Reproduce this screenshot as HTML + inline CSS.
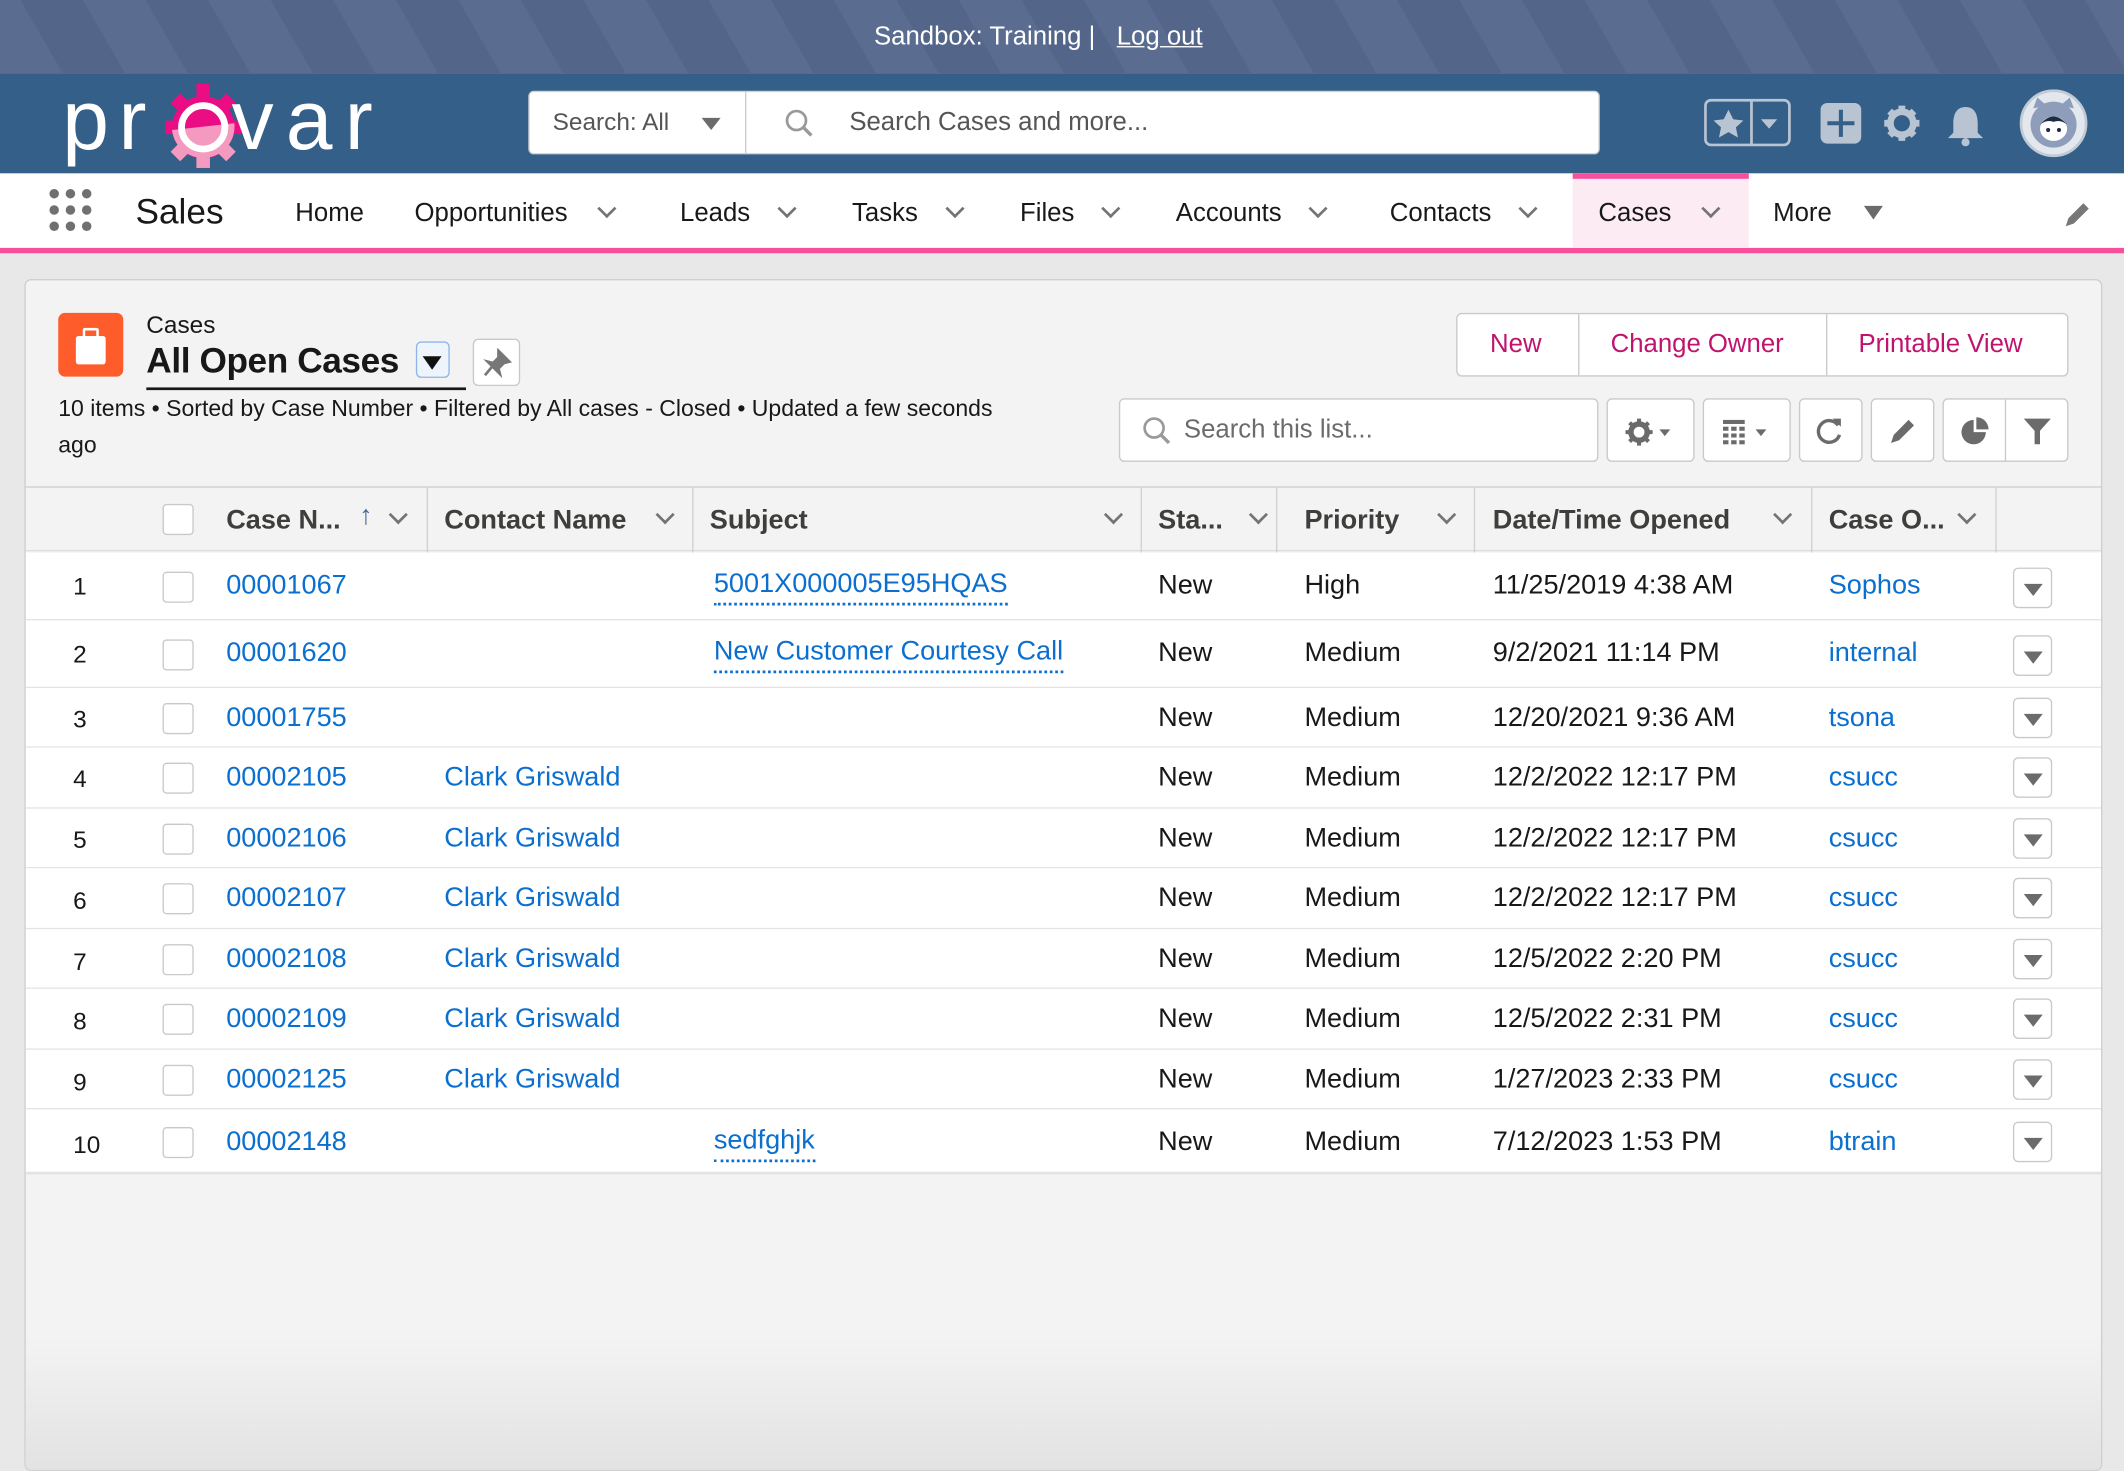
<!DOCTYPE html>
<html><head><meta charset="utf-8">
<style>
*{box-sizing:border-box;margin:0;padding:0}
html,body{width:2124px;height:1468px;overflow:hidden;background:#e9e9e9}
#w{position:absolute;left:0;top:0;width:1568px;height:1084px;transform:scale(1.354592);transform-origin:0 0;font-family:"Liberation Sans",Arial,sans-serif;color:#181818;background:#e8e8e8}
.a{position:absolute}
.top{left:0;top:0;width:1568px;height:54px;background:repeating-linear-gradient(60deg,#5a6d91 0 40px,#536689 40px 80px)}
.hdr{left:0;top:54px;width:1568px;height:74px;background:#345f89}
.nav{left:0;top:128px;width:1568px;border-bottom:4px solid #f84f9c;height:59px;background:#fff}
.ni{position:absolute;top:0;height:55px;line-height:57px;font-size:19px;color:#181818}
.chev{display:inline-block;width:10px;height:10px;border-right:2px solid #747474;border-bottom:2px solid #747474;transform:rotate(45deg);margin-left:14px;position:relative;top:-4px}
.card{left:18px;top:206px;width:1534px;height:880px;background:#f3f3f3;border:1px solid #cfcfcf;border-radius:5px;overflow:hidden}
.btn{position:absolute;background:#fff;border:1px solid #c9c9c9;border-radius:4px}
.tbl{left:0;top:152px;width:1534px}
.th{position:absolute;top:0;height:48px;line-height:48px;font-weight:bold;font-size:20px;color:#3e3e3c}
.sep{position:absolute;top:0;width:1px;height:48px;background:#d0d0d0}
.hc{position:absolute;top:16px}
.hc .chev{margin-left:0}
.row{position:absolute;left:0;width:1534px;background:#fff;border-bottom:1px solid #e3e3e3}
.c{position:absolute;font-size:20px;white-space:nowrap}
.lk{color:#0b6fcf}
.ul{border-bottom:2px dotted #0b6fcf;padding-bottom:2px}
.cb{position:absolute;left:101px;width:23px;height:23px;border:1px solid #c9c9c9;border-radius:3px;background:#fff}
.act{position:absolute;left:1467px;width:29px;height:30px;border:1px solid #c9c9c9;border-radius:4px;background:#fff}
.act:after{content:"";position:absolute;left:7px;top:11px;border-left:7px solid transparent;border-right:7px solid transparent;border-top:9px solid #6b6b6b}
</style></head><body><div id="w">
<div class="a top"></div>
<div class="a" style="left:0;top:17px;width:1533px;text-align:center;color:#fff;font-size:19px">Sandbox: Training |&nbsp;&nbsp;&nbsp;<span style="text-decoration:underline">Log out</span></div>
<div class="a hdr"></div>
<svg class="a" style="left:40px;top:58px" width="270" height="70" viewBox="0 0 270 70">
 <g fill="#ea0d83"><circle cx="110" cy="36" r="23"/>
 <rect x="105" y="4" width="10" height="10"/><rect x="82" y="31" width="10" height="10"/><rect x="128" y="31" width="10" height="10"/>
 <rect x="88" y="13" width="10" height="10" transform="rotate(45 93 18)"/><rect x="122" y="13" width="10" height="10" transform="rotate(45 127 18)"/></g>
 <g fill="#f49ac1"><path d="M87 38 L133 33 A23 23 0 0 1 87 38Z"/><rect x="105" y="58" width="10" height="8"/>
 <rect x="88" y="49" width="10" height="10" transform="rotate(45 93 54)"/><rect x="122" y="49" width="10" height="10" transform="rotate(45 127 54)"/></g>
 <circle cx="110" cy="36" r="16" fill="none" stroke="#fff" stroke-width="5"/>
 <text x="6" y="52" font-family="Liberation Sans" font-size="62" fill="#fff" letter-spacing="7">pr</text>
 <text x="131" y="52" font-family="Liberation Sans" font-size="62" fill="#fff" letter-spacing="9">var</text>
</svg>
<div class="a" style="left:390px;top:67px;width:791px;height:47px;background:#fff;border-radius:4px;border:1px solid #cfcfcf"></div>
<div class="a" style="left:550px;top:68px;width:1px;height:45px;background:#ccc"></div>
<div class="a" style="left:408px;top:80px;font-size:18px;color:#555">Search: All</div>
<div class="a" style="left:518px;top:87px;border-left:7px solid transparent;border-right:7px solid transparent;border-top:9px solid #6b6b6b"></div>
<svg class="a" style="left:578px;top:79px" width="24" height="24"><circle cx="10" cy="10" r="7" fill="none" stroke="#999" stroke-width="2"/><path d="M15 15l6 6" stroke="#999" stroke-width="2.5"/></svg>
<div class="a" style="left:627px;top:80px;font-size:19px;color:#555">Search Cases and more...</div>
<svg class="a" style="left:1258px;top:66px" width="300" height="52">
 <rect x="1" y="8" width="62" height="33" rx="4" fill="none" stroke="#b9c4d3" stroke-width="2"/><line x1="35" y1="8" x2="35" y2="41" stroke="#b9c4d3" stroke-width="2"/>
 <path d="M18 15l3.5 7 7.5 1-5.5 5 1.5 7.5-7-4-7 4 1.5-7.5-5.5-5 7.5-1z" fill="#b9c4d3"/>
 <path d="M42 22h12l-6 7z" fill="#b9c4d3"/>
 <rect x="86" y="10" width="30" height="30" rx="5" fill="#b9c4d3"/><path d="M101 15v20M91 25h20" stroke="#345f89" stroke-width="3"/>
 <circle cx="146" cy="25" r="11" fill="#b9c4d3"/><g stroke="#b9c4d3" stroke-width="5"><path d="M146 12v26M133 25h26M137 16l18 18M155 16l-18 18"/></g><circle cx="146" cy="25" r="6" fill="#345f89"/>
 <path d="M193 13c-7 0-9 6-9 12v7l-4 4h26l-4-4v-7c0-6-2-12-9-12z" fill="#b9c4d3"/><circle cx="193" cy="39" r="3" fill="#b9c4d3"/>
 <circle cx="258" cy="25" r="24" fill="#e3e8ef" stroke="#c2cad6" stroke-width="2"/>
 <path d="M243 14l3-8 7 6zM273 14l-3-8-7 6z" fill="#8d9dba"/>
 <circle cx="258" cy="26" r="17" fill="#8d9dba"/><ellipse cx="258" cy="29" rx="10" ry="9" fill="#fff"/><path d="M248 26q10-12 20 0q-5-4-10-2q-5-2-10 2z" fill="#1e2b45"/>
 <circle cx="254" cy="30" r="1.5" fill="#1e2b45"/><circle cx="262" cy="30" r="1.5" fill="#1e2b45"/>
</svg>
<div class="a nav"></div>
<div class="a" style="left:1161px;top:128px;width:130px;height:55px;background:#fdebf4;border-top:4px solid #f84f9c"></div>
<svg class="a" style="left:36px;top:139px" width="34" height="34"><g fill="#707070"><circle cx="4" cy="4" r="3.5"/><circle cx="16" cy="4" r="3.5"/><circle cx="28" cy="4" r="3.5"/><circle cx="4" cy="16" r="3.5"/><circle cx="16" cy="16" r="3.5"/><circle cx="28" cy="16" r="3.5"/><circle cx="4" cy="28" r="3.5"/><circle cx="16" cy="28" r="3.5"/><circle cx="28" cy="28" r="3.5"/></g></svg>
<div class="ni" style="left:100px;font-size:26px;top:128px">Sales</div>
<div class="ni" style="left:218px;top:129px">Home</div>
<div class="ni" style="left:306px;top:129px">Opportunities<span class="chev" style="margin-left:24px"></span></div>
<div class="ni" style="left:502px;top:129px">Leads<span class="chev" style="margin-left:22px"></span></div>
<div class="ni" style="left:629px;top:129px">Tasks<span class="chev" style="margin-left:22px"></span></div>
<div class="ni" style="left:753px;top:129px">Files<span class="chev" style="margin-left:22px"></span></div>
<div class="ni" style="left:868px;top:129px">Accounts<span class="chev" style="margin-left:22px"></span></div>
<div class="ni" style="left:1026px;top:129px">Contacts<span class="chev" style="margin-left:22px"></span></div>
<div class="ni" style="left:1180px;top:129px">Cases<span class="chev" style="margin-left:24px"></span></div>
<div class="ni" style="left:1309px;top:129px">More</div>
<div class="a" style="left:1376px;top:152px;border-left:7px solid transparent;border-right:7px solid transparent;border-top:10px solid #6b6b6b"></div>
<svg class="a" style="left:1522px;top:146px" width="24" height="24"><path d="M3 21l2-6 11-11 4 4-11 11z" fill="#777"/></svg>

<div class="a card">
 <div class="a" style="left:24px;top:24px;width:48px;height:47px;background:#fe5c2b;border-radius:5px"></div>
 <div class="a" style="left:37px;top:41px;width:22px;height:21px;background:#fff;border-radius:2px"></div>
 <div class="a" style="left:42px;top:35px;width:12px;height:8px;border:2px solid #fff;border-bottom:none;border-radius:2px 2px 0 0"></div>
 <div class="a" style="left:89px;top:23px;font-size:18px">Cases</div>
 <div class="a" style="left:89px;top:44px;font-size:26px;font-weight:bold;letter-spacing:-0.3px">All Open Cases</div>
 <div class="a" style="left:89px;top:79px;width:236px;height:2px;background:#181818"></div>
 <div class="a" style="left:288px;top:45px;width:25px;height:27px;border:1px solid #8fb6e8;border-radius:4px;background:#eef4fc"></div>
 <div class="a" style="left:293px;top:56px;border-left:7px solid transparent;border-right:7px solid transparent;border-top:10px solid #111"></div>
 <div class="btn" style="left:330px;top:43px;width:35px;height:35px"></div>
 <svg class="a" style="left:337px;top:50px" width="22" height="22"><path d="M12 2l8 8-4 1-4 4 1 4-9-9 4 1 4-4z M7 14l-5 6" fill="#777" stroke="#777" stroke-width="2"/></svg>
 <div class="a" style="left:24px;top:81px;font-size:17px;line-height:27px;width:690px">10 items • Sorted by Case Number • Filtered by All cases - Closed • Updated a few seconds ago</div>

 <div class="btn" style="left:1056px;top:24px;width:452px;height:47px"></div>
 <div class="a" style="left:1146px;top:25px;width:1px;height:45px;background:#c9c9c9"></div>
 <div class="a" style="left:1329px;top:25px;width:1px;height:45px;background:#c9c9c9"></div>
 <div class="a" style="left:1081px;top:37px;font-size:19px;color:#c0136e">New</div>
 <div class="a" style="left:1170px;top:37px;font-size:19px;color:#c0136e">Change Owner</div>
 <div class="a" style="left:1353px;top:37px;font-size:19px;color:#c0136e">Printable View</div>

 <div class="btn" style="left:807px;top:87px;width:354px;height:47px"></div>
 <svg class="a" style="left:823px;top:99px" width="24" height="24"><circle cx="10" cy="10" r="7" fill="none" stroke="#9a9a9a" stroke-width="2"/><path d="M15 15l6 6" stroke="#9a9a9a" stroke-width="2.5"/></svg>
 <div class="a" style="left:855px;top:100px;font-size:19px;color:#6b6b6b">Search this list...</div>
 <div class="btn" style="left:1167px;top:87px;width:65px;height:47px"></div>
 <svg class="a" style="left:1180px;top:100px" width="40" height="24"><circle cx="11" cy="12" r="6" fill="none" stroke="#6b6b6b" stroke-width="4"/><g stroke="#6b6b6b" stroke-width="3"><path d="M11 2v4M11 18v4M1 12h4M17 12h4M4 5l3 3M15 16l3 3M18 5l-3 3M7 16l-3 3"/></g><path d="M26 10h8l-4 5z" fill="#6b6b6b"/></svg>
 <div class="btn" style="left:1238px;top:87px;width:65px;height:47px"></div>
 <svg class="a" style="left:1251px;top:101px" width="40" height="22"><g fill="#6b6b6b"><rect x="2" y="2" width="16" height="3"/><rect x="2" y="7" width="4" height="3"/><rect x="8" y="7" width="4" height="3"/><rect x="14" y="7" width="4" height="3"/><rect x="2" y="12" width="4" height="3"/><rect x="8" y="12" width="4" height="3"/><rect x="14" y="12" width="4" height="3"/><rect x="2" y="17" width="4" height="3"/><rect x="8" y="17" width="4" height="3"/><rect x="14" y="17" width="4" height="3"/><path d="M26 9h8l-4 5z"/></g></svg>
 <div class="btn" style="left:1309px;top:87px;width:47px;height:47px"></div>
 <svg class="a" style="left:1320px;top:99px" width="24" height="24"><path d="M18 8a8 8 0 1 0 1 7" fill="none" stroke="#6b6b6b" stroke-width="2.5"/><path d="M14 3h6v6z" fill="#6b6b6b"/></svg>
 <div class="btn" style="left:1362px;top:87px;width:47px;height:47px"></div>
 <svg class="a" style="left:1373px;top:99px" width="24" height="24"><path d="M4 21l2-6 11-11 4 4-11 11z" fill="#6b6b6b"/></svg>
 <div class="btn" style="left:1415px;top:87px;width:93px;height:47px"></div>
 <div class="a" style="left:1461px;top:88px;width:1px;height:45px;background:#c9c9c9"></div>
 <svg class="a" style="left:1427px;top:99px" width="24" height="24"><path d="M11 4a9 9 0 1 0 9 9h-9z" fill="#6b6b6b"/><path d="M13 2a9 9 0 0 1 9 9h-9z" fill="#6b6b6b"/></svg>
 <svg class="a" style="left:1473px;top:99px" width="24" height="24"><path d="M2 3h20l-8 9v10h-4V12z" fill="#6b6b6b"/></svg>

 <div class="a tbl" style="height:48px;border-top:1px solid #cfcfcf;border-bottom:1px solid #dedede"></div>
 <div class="a" style="left:0;top:153px;width:1534px;height:48px">
  <div class="cb" style="top:12px"></div>
  <div class="th" style="left:148px">Case N...</div>
  <div class="a" style="left:246px;top:10px;font-size:20px;color:#4a6a9c;font-weight:bold">↑</div>
  <div class="hc" style="left:270px"><span class="chev"></span></div>
  <div class="sep" style="left:296px"></div>
  <div class="th" style="left:309px">Contact Name</div><div class="hc" style="left:467px"><span class="chev"></span></div>
  <div class="sep" style="left:492px"></div>
  <div class="th" style="left:505px">Subject</div><div class="hc" style="left:798px"><span class="chev"></span></div>
  <div class="sep" style="left:823px"></div>
  <div class="th" style="left:836px">Sta...</div><div class="hc" style="left:905px"><span class="chev"></span></div>
  <div class="sep" style="left:923px"></div>
  <div class="th" style="left:944px">Priority</div><div class="hc" style="left:1044px"><span class="chev"></span></div>
  <div class="sep" style="left:1069px"></div>
  <div class="th" style="left:1083px">Date/Time Opened</div><div class="hc" style="left:1292px"><span class="chev"></span></div>
  <div class="sep" style="left:1318px"></div>
  <div class="th" style="left:1331px">Case O...</div><div class="hc" style="left:1428px"><span class="chev"></span></div>
  <div class="sep" style="left:1454px"></div>
 </div>

 <div class="row" style="top:201px;height:50px"><div class="c" style="left:35px;top:15px;font-size:18px">1</div><div class="cb" style="top:14px"></div><div class="c lk" style="left:148px;top:13px">00001067</div><div class="c lk ul" style="left:508px;top:12px">5001X000005E95HQAS</div><div class="c" style="left:836px;top:13px">New</div><div class="c" style="left:944px;top:13px">High</div><div class="c" style="left:1083px;top:13px">11/25/2019 4:38 AM</div><div class="c lk" style="left:1331px;top:13px">Sophos</div><div class="act" style="top:11px"></div></div>
 <div class="row" style="top:251px;height:50px"><div class="c" style="left:35px;top:15px;font-size:18px">2</div><div class="cb" style="top:14px"></div><div class="c lk" style="left:148px;top:13px">00001620</div><div class="c lk ul" style="left:508px;top:12px">New Customer Courtesy Call</div><div class="c" style="left:836px;top:13px">New</div><div class="c" style="left:944px;top:13px">Medium</div><div class="c" style="left:1083px;top:13px">9/2/2021 11:14 PM</div><div class="c lk" style="left:1331px;top:13px">internal</div><div class="act" style="top:11px"></div></div>
 <div class="row" style="top:301px;height:44px"><div class="c" style="left:35px;top:13px;font-size:18px">3</div><div class="cb" style="top:11px"></div><div class="c lk" style="left:148px;top:11px">00001755</div><div class="c" style="left:836px;top:11px">New</div><div class="c" style="left:944px;top:11px">Medium</div><div class="c" style="left:1083px;top:11px">12/20/2021 9:36 AM</div><div class="c lk" style="left:1331px;top:11px">tsona</div><div class="act" style="top:7px"></div></div>
 <div class="row" style="top:345px;height:45px"><div class="c" style="left:35px;top:13px;font-size:18px">4</div><div class="cb" style="top:11px"></div><div class="c lk" style="left:148px;top:11px">00002105</div><div class="c lk" style="left:309px;top:11px">Clark Griswald</div><div class="c" style="left:836px;top:11px">New</div><div class="c" style="left:944px;top:11px">Medium</div><div class="c" style="left:1083px;top:11px">12/2/2022 12:17 PM</div><div class="c lk" style="left:1331px;top:11px">csucc</div><div class="act" style="top:7px"></div></div>
 <div class="row" style="top:390px;height:44px"><div class="c" style="left:35px;top:13px;font-size:18px">5</div><div class="cb" style="top:11px"></div><div class="c lk" style="left:148px;top:11px">00002106</div><div class="c lk" style="left:309px;top:11px">Clark Griswald</div><div class="c" style="left:836px;top:11px">New</div><div class="c" style="left:944px;top:11px">Medium</div><div class="c" style="left:1083px;top:11px">12/2/2022 12:17 PM</div><div class="c lk" style="left:1331px;top:11px">csucc</div><div class="act" style="top:7px"></div></div>
 <div class="row" style="top:434px;height:45px"><div class="c" style="left:35px;top:14px;font-size:18px">6</div><div class="cb" style="top:11px"></div><div class="c lk" style="left:148px;top:11px">00002107</div><div class="c lk" style="left:309px;top:11px">Clark Griswald</div><div class="c" style="left:836px;top:11px">New</div><div class="c" style="left:944px;top:11px">Medium</div><div class="c" style="left:1083px;top:11px">12/2/2022 12:17 PM</div><div class="c lk" style="left:1331px;top:11px">csucc</div><div class="act" style="top:7px"></div></div>
 <div class="row" style="top:479px;height:44px"><div class="c" style="left:35px;top:14px;font-size:18px">7</div><div class="cb" style="top:11px"></div><div class="c lk" style="left:148px;top:11px">00002108</div><div class="c lk" style="left:309px;top:11px">Clark Griswald</div><div class="c" style="left:836px;top:11px">New</div><div class="c" style="left:944px;top:11px">Medium</div><div class="c" style="left:1083px;top:11px">12/5/2022 2:20 PM</div><div class="c lk" style="left:1331px;top:11px">csucc</div><div class="act" style="top:7px"></div></div>
 <div class="row" style="top:523px;height:45px"><div class="c" style="left:35px;top:14px;font-size:18px">8</div><div class="cb" style="top:11px"></div><div class="c lk" style="left:148px;top:11px">00002109</div><div class="c lk" style="left:309px;top:11px">Clark Griswald</div><div class="c" style="left:836px;top:11px">New</div><div class="c" style="left:944px;top:11px">Medium</div><div class="c" style="left:1083px;top:11px">12/5/2022 2:31 PM</div><div class="c lk" style="left:1331px;top:11px">csucc</div><div class="act" style="top:7px"></div></div>
 <div class="row" style="top:568px;height:44px"><div class="c" style="left:35px;top:14px;font-size:18px">9</div><div class="cb" style="top:11px"></div><div class="c lk" style="left:148px;top:11px">00002125</div><div class="c lk" style="left:309px;top:11px">Clark Griswald</div><div class="c" style="left:836px;top:11px">New</div><div class="c" style="left:944px;top:11px">Medium</div><div class="c" style="left:1083px;top:11px">1/27/2023 2:33 PM</div><div class="c lk" style="left:1331px;top:11px">csucc</div><div class="act" style="top:7px"></div></div>
 <div class="row" style="top:612px;height:48px;border-bottom:2px solid #e3e3e3"><div class="c" style="left:35px;top:16px;font-size:18px">10</div><div class="cb" style="top:13px"></div><div class="c lk" style="left:148px;top:13px">00002148</div><div class="c lk ul" style="left:508px;top:12px">sedfghjk</div><div class="c" style="left:836px;top:13px">New</div><div class="c" style="left:944px;top:13px">Medium</div><div class="c" style="left:1083px;top:13px">7/12/2023 1:53 PM</div><div class="c lk" style="left:1331px;top:13px">btrain</div><div class="act" style="top:9px"></div></div>
 <div class="a" style="left:0;top:780px;width:1534px;height:100px;background:linear-gradient(#f3f3f300,#e2e2e2)"></div>
</div>
</div></body></html>
